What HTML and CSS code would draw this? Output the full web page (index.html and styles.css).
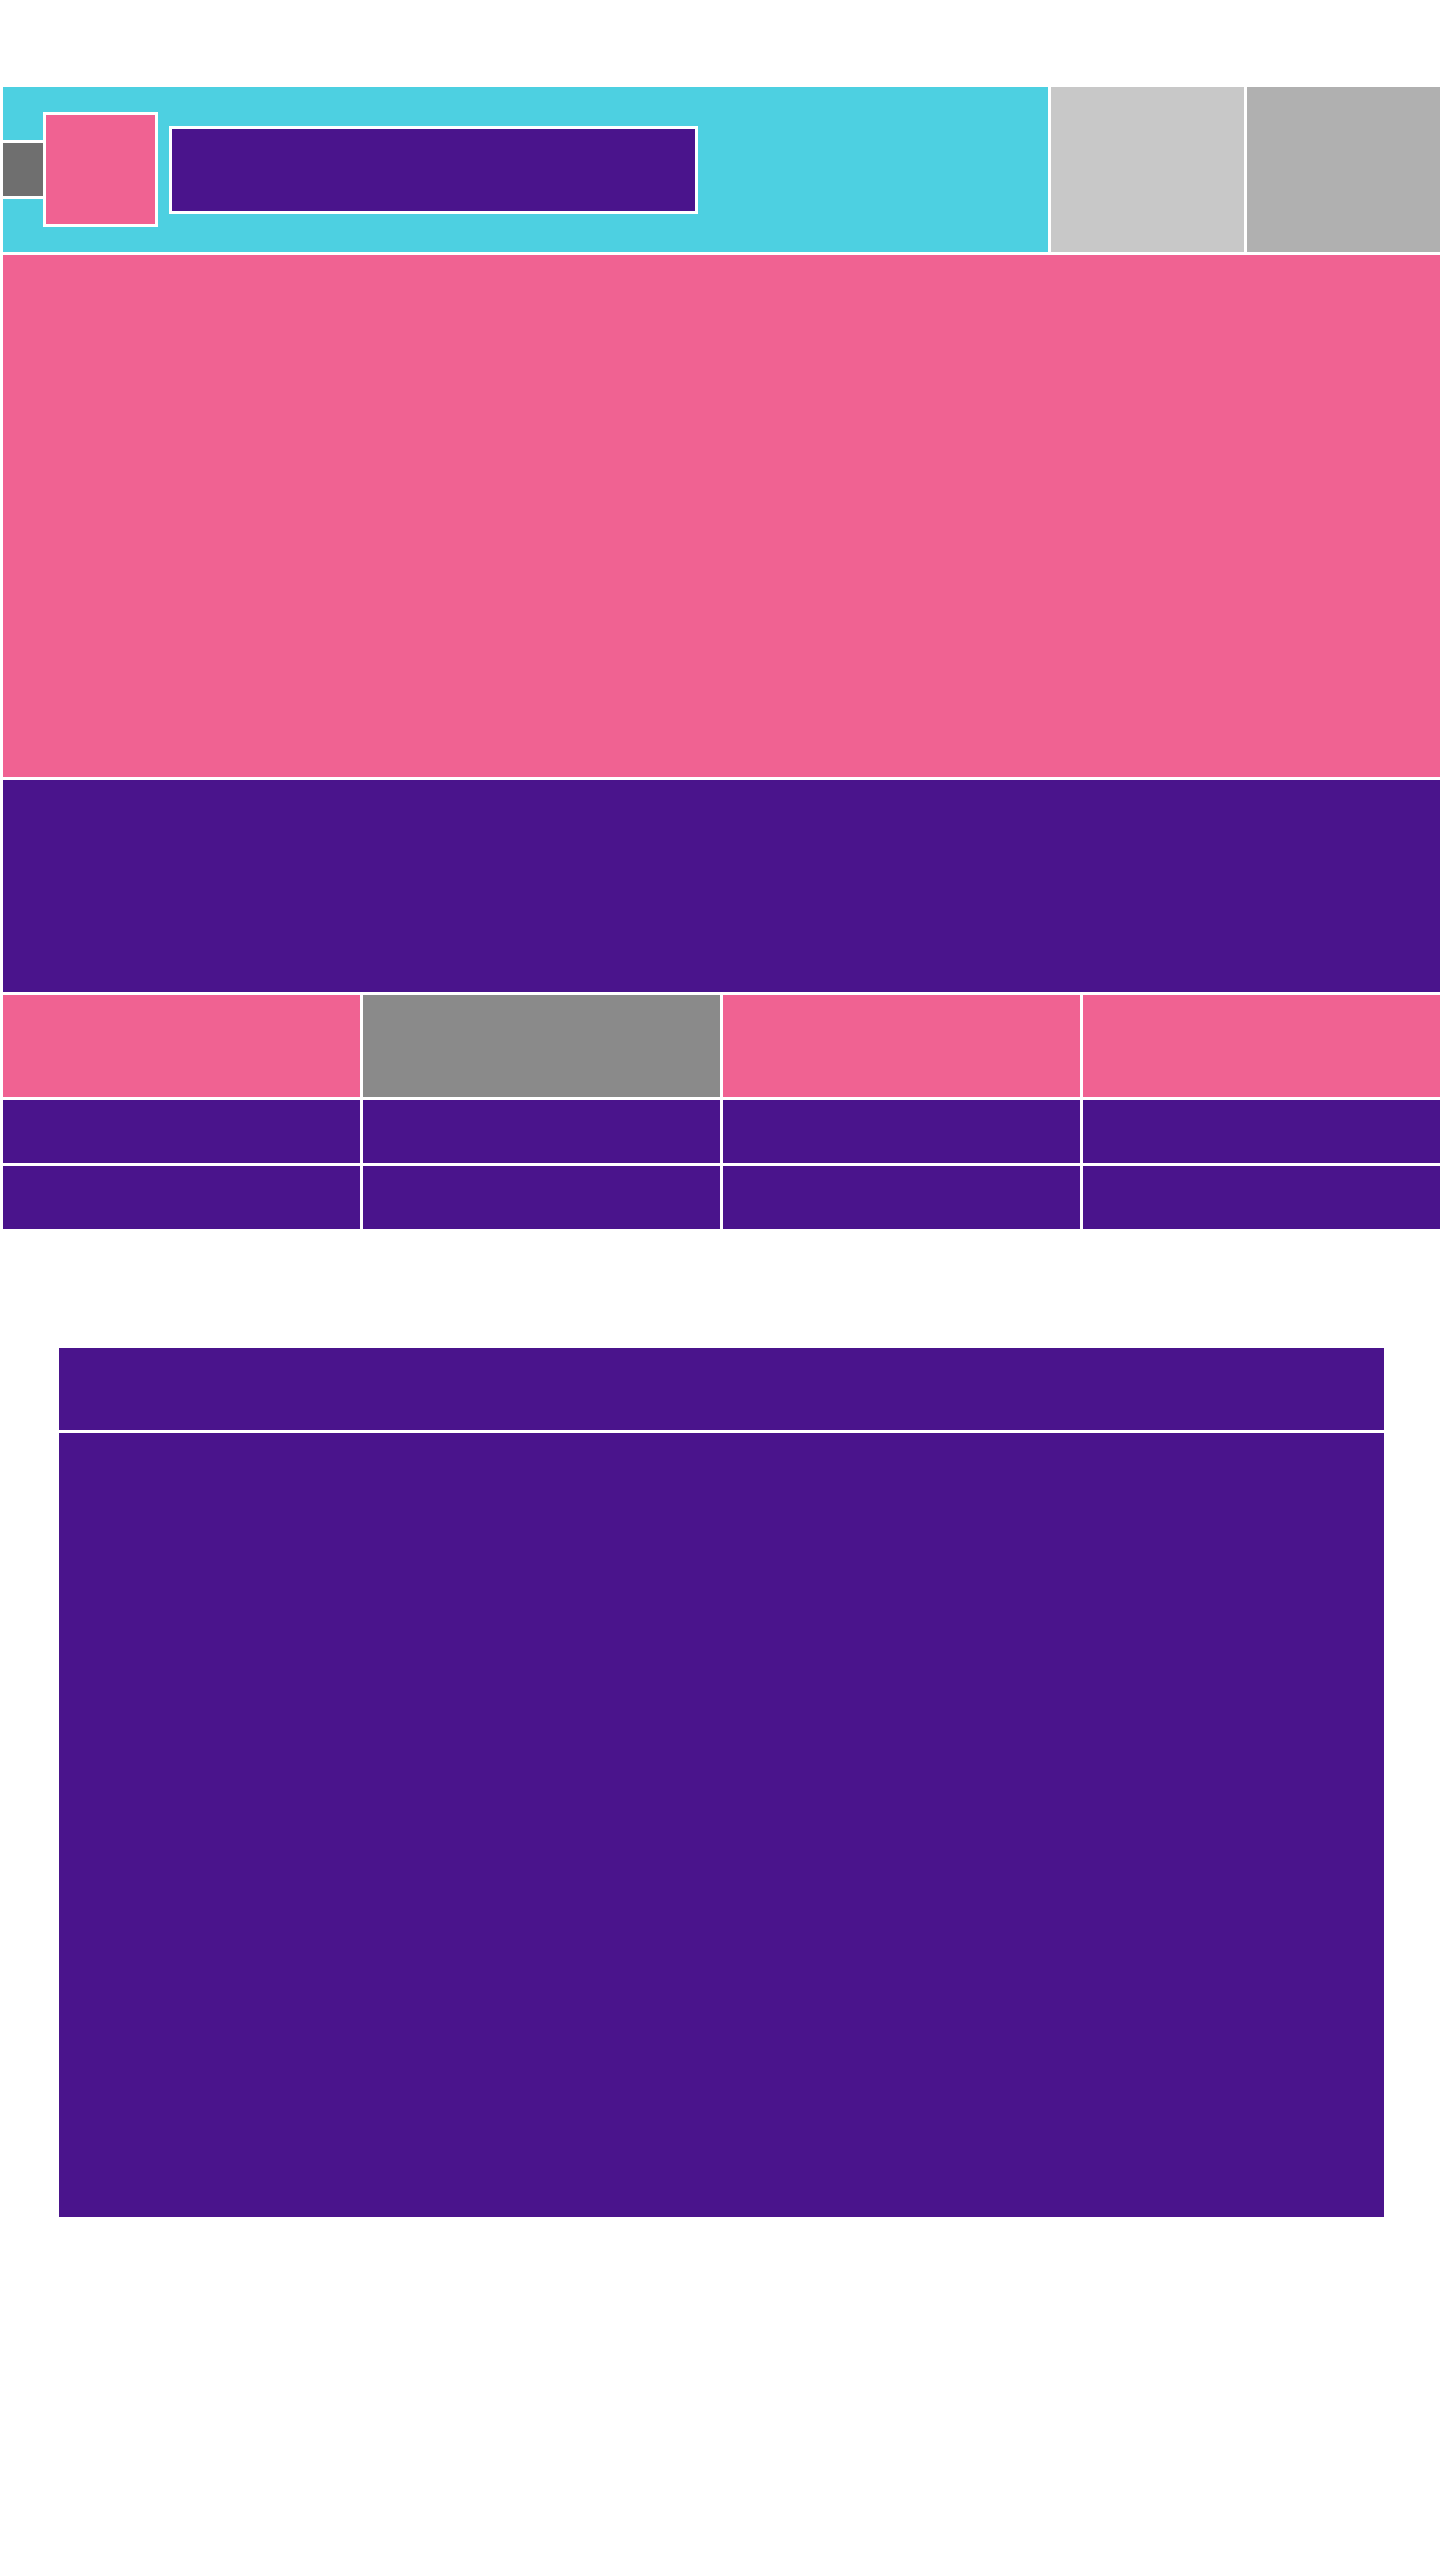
FILE: index.html
```html
<!DOCTYPE html>
<html lang="en">

<head>
    <meta charset="UTF-8">
    <meta name="viewport" content="width=device-width, initial-scale=1.0">
    <title>Layout</title>
    <link rel="stylesheet" href="styles.css">
</head>

<body>

    <div class="page">

        <div class="top">

            <header class="header">
                <div class="brand">
                    <div class="brand-tab"></div>
                    <div class="brand-logo"></div>
                    <div class="brand-title"></div>
                </div>
                <div class="header-btn light"></div>
                <div class="header-btn dark"></div>
            </header>

            <div class="hero"></div>

            <div class="band"></div>

            <div class="grid">
                <div class="cell head"></div>
                <div class="cell head muted"></div>
                <div class="cell head"></div>
                <div class="cell head"></div>

                <div class="cell row"></div>
                <div class="cell row"></div>
                <div class="cell row"></div>
                <div class="cell row"></div>

                <div class="cell row"></div>
                <div class="cell row"></div>
                <div class="cell row"></div>
                <div class="cell row"></div>
            </div>

        </div>

        <section class="panel">
            <div class="panel-head"></div>
            <div class="panel-body"></div>
        </section>

    </div>

</body>

</html>
```

FILE: styles.css
```css
body {
    margin: 0;
    padding: 0;
    background-color: #fff;
    font-family: "Liberation Sans", Arial, sans-serif;
}

.page {
    width: 1437px;
    margin-left: 3px;
    padding-top: 87px;
    padding-bottom: 343px;
}

.top {
    display: flex;
    flex-direction: column;
    gap: 3px;
}

/* header */
.header {
    display: flex;
    gap: 3px;
    height: 165px;
}

.brand {
    flex: 1;
    background-color: #4dd0e1;
    display: flex;
    align-items: center;
}

.brand-tab {
    width: 40px;
    height: 53px;
    background-color: #6f6f6f;
    border-top: 3px solid #fff;
    border-bottom: 3px solid #fff;
}

.brand-logo {
    width: 109px;
    height: 109px;
    background-color: #f06292;
    border: 3px solid #fff;
}

.brand-title {
    width: 523px;
    height: 82px;
    margin-left: 11px;
    background-color: #4a148c;
    border: 3px solid #fff;
}

.header-btn {
    width: 193px;
}

.header-btn.light {
    background-color: #c8c8c8;
}

.header-btn.dark {
    background-color: #b0b0b0;
}

/* hero + band */
.hero {
    height: 522px;
    background-color: #f06292;
}

.band {
    height: 212px;
    background-color: #4a148c;
}

/* table grid */
.grid {
    display: grid;
    grid-template-columns: repeat(4, 1fr);
    gap: 3px;
}

.cell.head {
    height: 102px;
    background-color: #f06292;
}

.cell.head.muted {
    background-color: #8a8a8a;
}

.cell.row {
    height: 63px;
    background-color: #4a148c;
}

/* bottom panel */
.panel {
    width: 1325px;
    margin: 119px auto 0;
    display: flex;
    flex-direction: column;
    gap: 3px;
}

.panel-head {
    height: 82px;
    background-color: #4a148c;
}

.panel-body {
    height: 784px;
    background-color: #4a148c;
}
```
